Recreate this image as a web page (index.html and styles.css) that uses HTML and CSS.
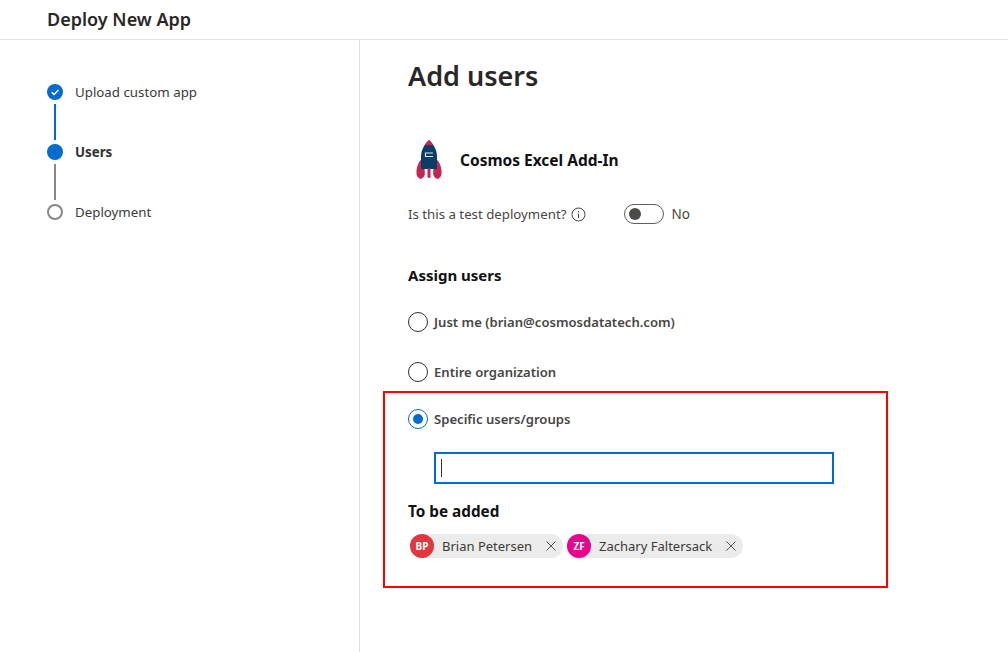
FILE: index.html
```html
<!DOCTYPE html>
<html lang="en">
<head>
<meta charset="utf-8">
<title>Deploy New App</title>
<link rel="stylesheet" href="styles.css">
</head>
<body>
<header class="topbar"><h1 class="topbar-title">Deploy New App</h1></header>
<div class="layout">
  <nav class="steps">
    <div class="step">
      <div class="step-rail">
        <svg class="step-icon" width="16" height="16" viewBox="0 0 16 16"><circle cx="8" cy="8" r="8" fill="#006cd0"/><path d="M4.600 8.300 7 10.600 11.500 5.900" fill="none" stroke="#fff" stroke-width="1.400"/></svg>
        <div class="step-line step-line-done"></div>
      </div>
      <span class="step-label">Upload custom app</span>
    </div>
    <div class="step">
      <div class="step-rail">
        <div class="step-dot"></div>
        <div class="step-line"></div>
      </div>
      <span class="step-label step-label-active">Users</span>
    </div>
    <div class="step">
      <div class="step-rail"><div class="step-ring"></div></div>
      <span class="step-label">Deployment</span>
    </div>
  </nav>
  <main class="content">
    <h2 class="page-title">Add users</h2>
    <div class="app-row">
      <svg class="app-icon" width="28" height="42" viewBox="0 0 28 42">
        <path d="M5.500 21C2.500 25 1 30 1.500 35c.3 2.500 2 4.500 4 5 2.500-.5 4-2.500 4.300-5 .4-5-1-10-4.300-14z" fill="#c4264f"/>
        <path d="M22.500 21c-3.300 4-4.700 9-4.300 14 .3 2.500 1.800 4.500 4.300 5 2-.5 3.700-2.500 4-5 .5-5-1-10-4-14z" fill="#c4264f"/>
        <path d="M14 1C8.500 6 6 12 6 18v12h16V18C22 12 19.500 6 14 1z" fill="#0c3c68"/>
        <path d="M14 1c-2 1.800-3.500 3.500-4.500 5.300h9C17.500 4.500 16 2.800 14 1z" fill="#c4264f"/>
        <rect x="12.500" y="29" width="3" height="10" rx="1.500" fill="#c4264f"/>
        <path d="M18 14h-7.500v3.500H18" fill="none" stroke="#d8e4ee" stroke-width="1.200"/>
      </svg>
      <span class="app-name">Cosmos Excel Add-In</span>
    </div>
    <div class="test-row">
      <span class="test-label">Is this a test deployment?</span>
      <svg class="info-icon" width="15" height="15" viewBox="0 0 15 15"><circle cx="7.500" cy="7.500" r="6.500" fill="none" stroke="#444" stroke-width="1"/><rect x="7" y="6.500" width="1" height="4.500" fill="#444"/><rect x="7" y="4" width="1" height="1.200" fill="#444"/></svg>
      <div class="toggle"><div class="toggle-knob"></div></div>
      <span class="toggle-text">No</span>
    </div>
    <h3 class="section-title">Assign users</h3>
    <div class="options">
      <div class="option option-first"><span class="radio"></span><span class="option-label">Just me (brian@cosmosdatatech.com)</span></div>
      <div class="option option-second"><span class="radio"></span><span class="option-label">Entire organization</span></div>
      <div class="option option-third"><span class="radio radio-on"><span class="radio-dot"></span></span><span class="option-label">Specific users/groups</span></div>
    </div>
    <div class="search-box"><span class="caret"></span></div>
    <h3 class="added-title">To be added</h3>
    <div class="chips">
      <div class="chip">
        <span class="avatar avatar-red">BP</span>
        <span class="chip-name">Brian Petersen</span>
        <svg class="chip-x" width="10" height="10" viewBox="0 0 10 10"><path d="M.5.500l9 9M9.500.500l-9 9" stroke="#555" stroke-width="1" fill="none"/></svg>
      </div>
      <div class="chip">
        <span class="avatar avatar-pink">ZF</span>
        <span class="chip-name">Zachary Faltersack</span>
        <svg class="chip-x" width="10" height="10" viewBox="0 0 10 10"><path d="M.5.500l9 9M9.500.500l-9 9" stroke="#555" stroke-width="1" fill="none"/></svg>
      </div>
    </div>
  </main>
</div>
<div class="highlight"></div>
</body>
</html>
```
FILE: styles.css
```css
* { box-sizing: border-box; }
html, body { margin: 0; height: 100%; }
body {
  position: relative;
  width: 1008px;
  height: 652px;
  overflow: hidden;
  background: #fff;
  color: #323130;
  font-family: "Noto Sans", "Open Sans", "Liberation Sans", sans-serif;
  font-size: 13px;
}
h1, h2, h3 { margin: 0; }
.topbar {
  height: 40px;
  padding: 0 0 2px 47px;
  border-bottom: 1px solid #e3e3e3;
  display: flex;
  align-items: center;
}
.topbar-title { font-size: 18px; font-weight: 600; color: #292827; }
.layout { display: flex; height: 612px; }
.steps {
  width: 360px;
  flex: none;
  border-right: 1px solid #e1e1e1;
  padding: 44px 0 0 47px;
}
.step { display: flex; gap: 12px; }
.step-rail { width: 16px; display: flex; flex-direction: column; align-items: center; }
.step-icon { display: block; flex: none; }
.step-line { width: 2px; height: 36px; margin: 4px 0; background: #8a8886; }
.step-line-done { background: #006cd0; }
.step-dot { width: 16px; height: 16px; border-radius: 50%; background: #006cd0; flex: none; }
.step-ring { width: 16px; height: 16px; border-radius: 50%; border: 2px solid #8a8886; flex: none; }
.step-label { line-height: 16px; font-size: 13.300px; color: #3b3a39; }
.step-label-active { font-weight: 700; color: #323130; }
.content { padding: 0 0 0 48px; flex: 1; }
.page-title { font-size: 27px; line-height: 36px; font-weight: 600; color: #292827; margin-top: 18px; }
.app-row { display: flex; align-items: center; margin-top: 45px; height: 42px; gap: 17px; margin-left: 7px; }
.app-icon { display: block; flex: none; }
.app-name { font-size: 15.500px; font-weight: 700; color: #111; }
.test-row { display: flex; align-items: center; margin-top: 23px; height: 20px; }
.test-label { font-size: 13.250px; color: #484644; }
.info-icon { margin-left: 5px; display: block; flex: none; }
.toggle {
  width: 40px; height: 20px; margin-left: 38px;
  border: 1px solid #605e5c; border-radius: 10px;
  padding: 4px; flex: none;
}
.toggle-knob { width: 12px; height: 12px; margin-top: -1px; border-radius: 50%; background: #4c4b4a; }
.toggle-text { margin-left: 7px; font-size: 13.500px; color: #484644; }
.section-title { font-size: 15px; font-weight: 700; color: #111; margin-top: 41px; line-height: 20px; }
.options { display: flex; flex-direction: column; }
.option { display: flex; align-items: center; gap: 6px; height: 20px; }
.option-first { margin-top: 27px; }
.option-second { margin-top: 30px; }
.option-third { margin-top: 27px; }
.radio {
  width: 20px; height: 20px; border-radius: 50%;
  border: 1px solid #323130; flex: none;
  display: flex; align-items: center; justify-content: center;
}
.radio-on { border-color: #006cd0; }
.radio-dot { width: 10px; height: 10px; border-radius: 50%; background: #006cd0; }
.option-label { font-size: 13.100px; font-weight: 600; color: #484644; }
.search-box {
  width: 400px; height: 32px; margin: 23px 0 0 26px;
  border: 2px solid #006cd0;
  display: flex; align-items: center; padding-left: 5px;
}
.caret { width: 1px; height: 18px; background: #323130; }
.added-title { font-size: 15.300px; font-weight: 700; color: #111; margin-top: 17px; line-height: 20px; }
.chips { display: flex; gap: 4px; margin: 13px 0 0 2px; }
.chip {
  display: flex; align-items: center;
  height: 24px; border-radius: 12px; background: #ebebeb;
}
.avatar {
  width: 24px; height: 24px; border-radius: 50%;
  display: flex; align-items: center; justify-content: center;
  color: #fff; font-size: 10px; font-weight: 700; flex: none;
}
.avatar-red { background: #e0383e; }
.avatar-pink { background: #ea038c; }
.chip-name { margin-left: 8px; font-size: 13px; color: #3b3a39; }
.chip-x { margin: 0 7px 0 14px; display: block; flex: none; }
.highlight {
  position: absolute; left: 383px; top: 391px;
  width: 505px; height: 197px;
  border: 2px solid #f00;
  pointer-events: none;
}
```
